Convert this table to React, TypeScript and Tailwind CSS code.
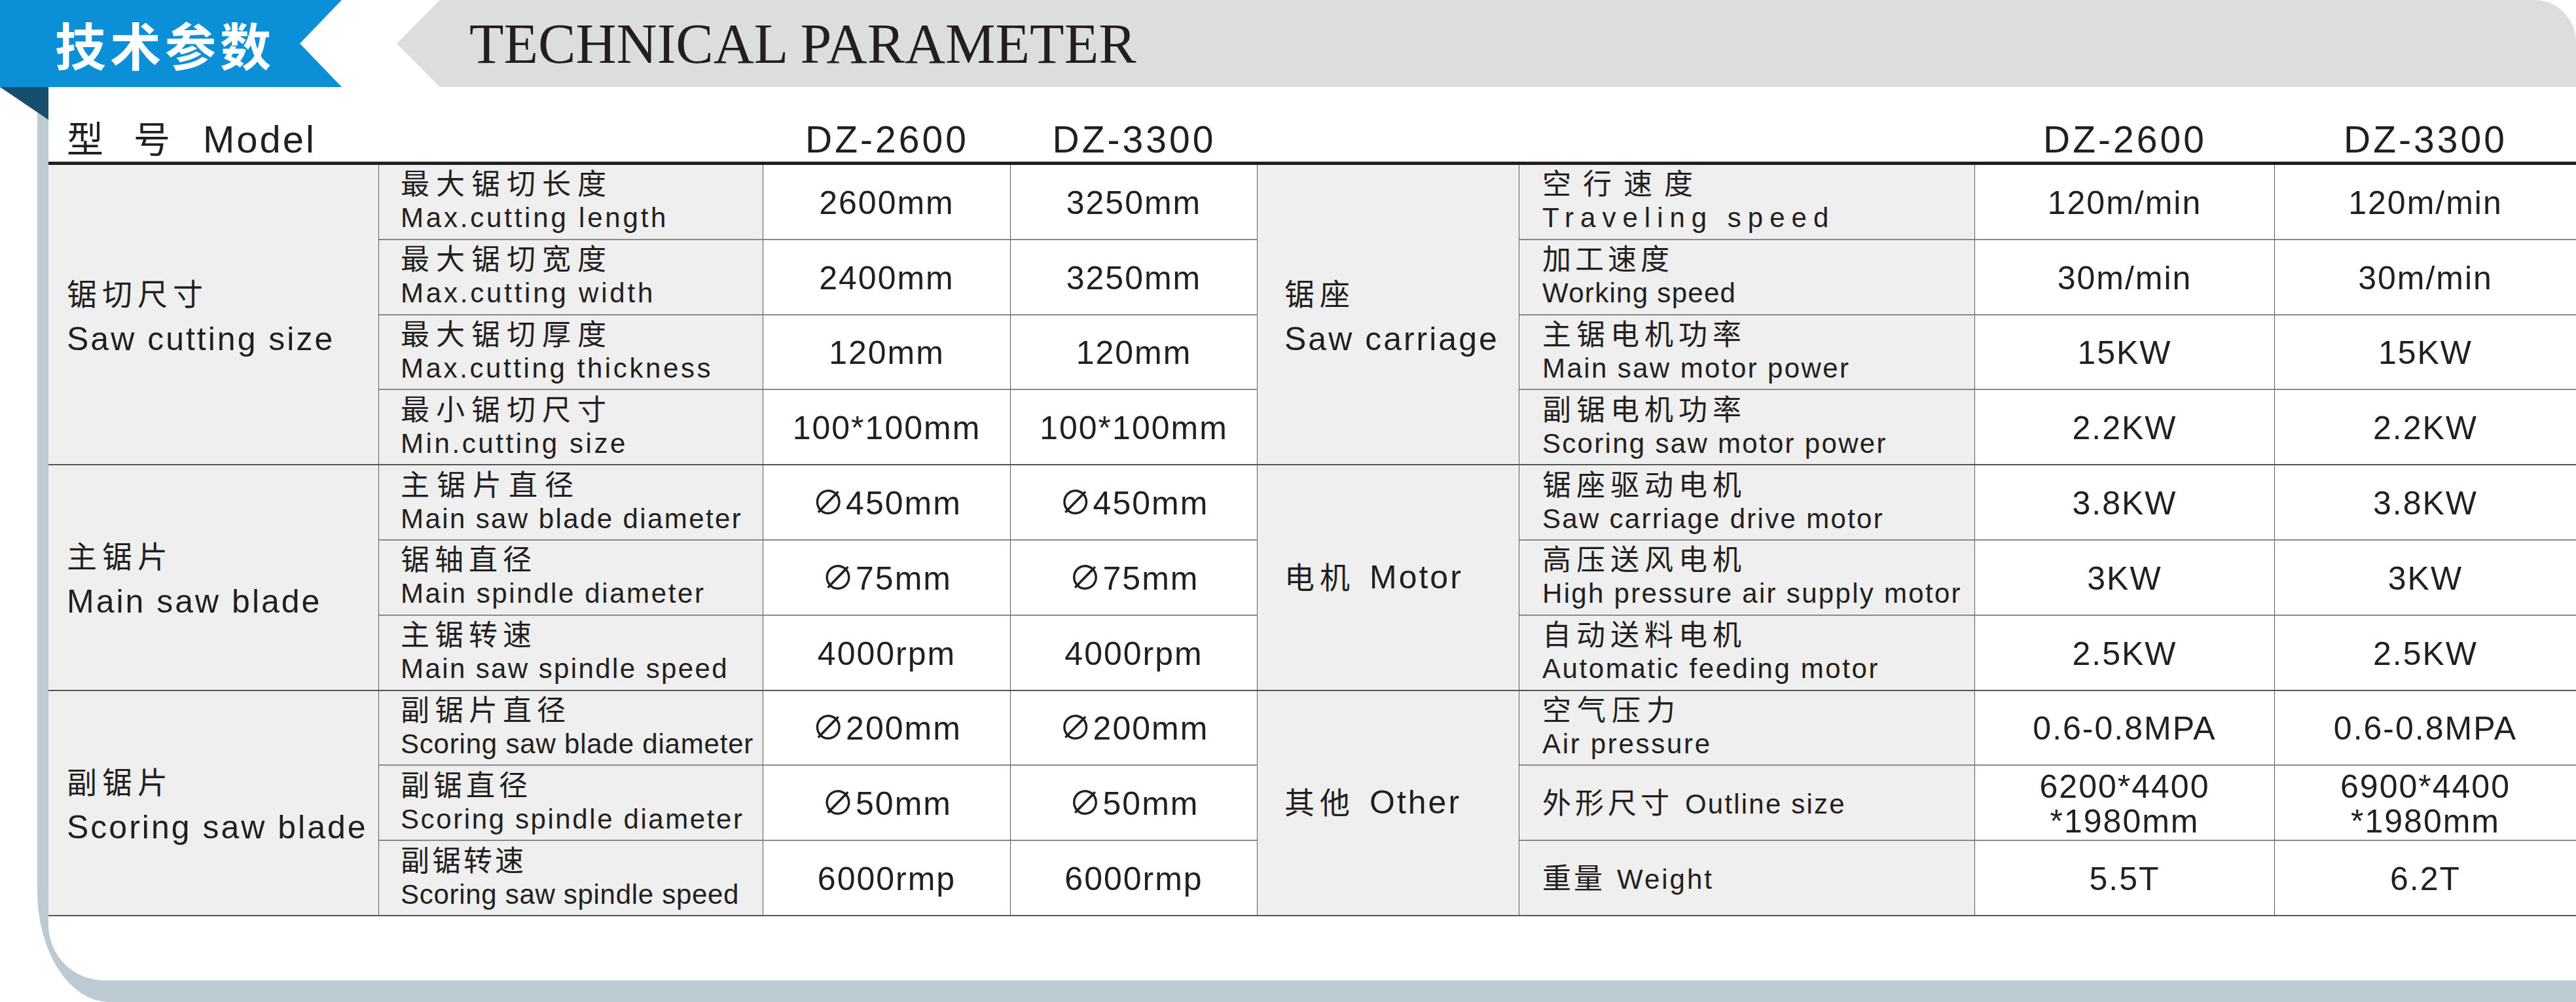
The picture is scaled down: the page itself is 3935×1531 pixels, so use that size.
import React from 'react';

type Item = {
  zh: string;
  en: string;
  a: string[];
  b: string[];
  zt?: string;
  et?: string;
  inline?: boolean;
};

type Group = { zh: string; en: string; inline?: boolean; items: Item[] };

const left: Group[] = [
  {
    zh: '锯切尺寸',
    en: 'Saw cutting size',
    items: [
      { zh: '最大锯切长度', en: 'Max.cutting length', a: ['2600mm'], b: ['3250mm'], zt: 'tracking-[10px]', et: 'tracking-[3.8px]' },
      { zh: '最大锯切宽度', en: 'Max.cutting width', a: ['2400mm'], b: ['3250mm'], zt: 'tracking-[10px]', et: 'tracking-[3.8px]' },
      { zh: '最大锯切厚度', en: 'Max.cutting thickness', a: ['120mm'], b: ['120mm'], zt: 'tracking-[10px]', et: 'tracking-[3.6px]' },
      { zh: '最小锯切尺寸', en: 'Min.cutting size', a: ['100*100mm'], b: ['100*100mm'], zt: 'tracking-[10px]', et: 'tracking-[3.6px]' },
    ],
  },
  {
    zh: '主锯片',
    en: 'Main saw blade',
    items: [
      { zh: '主锯片直径', en: 'Main saw blade diameter', a: ['∅450mm'], b: ['∅450mm'], zt: 'tracking-[11px]', et: 'tracking-[2.4px]' },
      { zh: '锯轴直径', en: 'Main spindle diameter', a: ['∅75mm'], b: ['∅75mm'], zt: 'tracking-[8px]', et: 'tracking-[2.6px]' },
      { zh: '主锯转速', en: 'Main saw spindle speed', a: ['4000rpm'], b: ['4000rpm'], zt: 'tracking-[8px]', et: 'tracking-[2.4px]' },
    ],
  },
  {
    zh: '副锯片',
    en: 'Scoring saw blade',
    items: [
      { zh: '副锯片直径', en: 'Scoring saw blade diameter', a: ['∅200mm'], b: ['∅200mm'], zt: 'tracking-[8px]', et: 'tracking-[0.8px]' },
      { zh: '副锯直径', en: 'Scoring spindle diameter', a: ['∅50mm'], b: ['∅50mm'], zt: 'tracking-[6px]', et: 'tracking-[2.6px]' },
      { zh: '副锯转速', en: 'Scoring saw spindle speed', a: ['6000rmp'], b: ['6000rmp'], zt: 'tracking-[4px]', et: 'tracking-[0.7px]' },
    ],
  },
];

const right: Group[] = [
  {
    zh: '锯座',
    en: 'Saw carriage',
    items: [
      { zh: '空行速度', en: 'Traveling speed', a: ['120m/min'], b: ['120m/min'], zt: 'tracking-[18px]', et: 'tracking-[10px]' },
      { zh: '加工速度', en: 'Working speed', a: ['30m/min'], b: ['30m/min'], zt: 'tracking-[6px]', et: 'tracking-[1.3px]' },
      { zh: '主锯电机功率', en: 'Main saw motor power', a: ['15KW'], b: ['15KW'], zt: 'tracking-[8px]', et: 'tracking-[2.4px]' },
      { zh: '副锯电机功率', en: 'Scoring saw motor power', a: ['2.2KW'], b: ['2.2KW'], zt: 'tracking-[8px]', et: 'tracking-[2.3px]' },
    ],
  },
  {
    zh: '电机',
    en: 'Motor',
    inline: true,
    items: [
      { zh: '锯座驱动电机', en: 'Saw carriage drive motor', a: ['3.8KW'], b: ['3.8KW'], zt: 'tracking-[8px]', et: 'tracking-[2.3px]' },
      { zh: '高压送风电机', en: 'High pressure air supply motor', a: ['3KW'], b: ['3KW'], zt: 'tracking-[8px]', et: 'tracking-[2.3px]' },
      { zh: '自动送料电机', en: 'Automatic feeding motor', a: ['2.5KW'], b: ['2.5KW'], zt: 'tracking-[8px]', et: 'tracking-[2.6px]' },
    ],
  },
  {
    zh: '其他',
    en: 'Other',
    inline: true,
    items: [
      { zh: '空气压力', en: 'Air pressure', a: ['0.6-0.8MPA'], b: ['0.6-0.8MPA'], zt: 'tracking-[9px]', et: 'tracking-[2.7px]' },
      { zh: '外形尺寸', en: 'Outline size', a: ['6200*4400', '*1980mm'], b: ['6900*4400', '*1980mm'], zt: 'tracking-[6px]', et: 'tracking-[2.2px]', inline: true },
      { zh: '重量', en: 'Weight', a: ['5.5T'], b: ['6.2T'], zt: 'tracking-[4px]', et: 'tracking-[3px]', inline: true },
    ],
  },
];

const font = 'font-["Liberation_Sans","Noto_Sans_CJK_SC",sans-serif]';
const cols = 'grid-cols-[505px_587px_378px_377px_400px_696px_458px_1fr]';

// flatten groups into 10 rows
function rowsOf(groups: Group[]) {
  const out: { group?: Group; span: number; item: Item; last: boolean }[] = [];
  groups.forEach((g) =>
    g.items.forEach((it, i) =>
      out.push({ group: i === 0 ? g : undefined, span: g.items.length, item: it, last: i === g.items.length - 1 }),
    ),
  );
  return out;
}

function GroupCell({ g, span, pad }: { g: Group; span: number; pad: string }) {
  const spanCls = span === 4 ? 'row-span-4' : 'row-span-3';
  return (
    <div
      className={`${spanCls} ${pad} ${g.inline ? '' : 'pt-[7px]'} bg-[#efefef] border-r border-r-[#5c5c5c] border-b-2 border-b-[#555] flex flex-col justify-center`}
    >
      {g.inline ? (
        <div className="flex items-baseline">
          <span className="text-[46px] leading-[56px] tracking-[8px]">{g.zh}</span>
          <span className="ml-[22px] text-[50px] leading-[56px] tracking-[3px]">{g.en}</span>
        </div>
      ) : (
        <>
          <div className="text-[46px] leading-[60px] tracking-[8px]">{g.zh}</div>
          <div className="mt-[7px] text-[50px] leading-[62px] tracking-[3px]">{g.en}</div>
        </>
      )}
    </div>
  );
}

function ParamCell({ it, last, pad }: { it: Item; last: boolean; pad: string }) {
  return (
    <div
      className={`bg-[#efefef] border-r border-r-[#5c5c5c] border-b-2 ${last ? 'border-b-[#555]' : 'border-b-[#8a8a8a]'} flex flex-col justify-center ${pad}`}
    >
      {it.inline ? (
        <div className="flex items-baseline pt-[4px]">
          <span className={`text-[44px] leading-[50px] ${it.zt}`}>{it.zh}</span>
          <span className={`ml-[18px] text-[42px] leading-[50px] ${it.et}`}>{it.en}</span>
        </div>
      ) : (
        <>
          <div className={`text-[44px] leading-[50px] ${it.zt}`}>{it.zh}</div>
          <div className={`text-[42px] leading-[52px] ${it.et}`}>{it.en}</div>
        </>
      )}
    </div>
  );
}

function ValueCell({ lines, last, end }: { lines: string[]; last: boolean; end?: boolean }) {
  return (
    <div
      className={`bg-white ${end ? '' : 'border-r border-r-[#5c5c5c]'} border-b-2 ${last ? 'border-b-[#555]' : 'border-b-[#8a8a8a]'} flex flex-col items-center justify-center pt-[4px] text-[50px] leading-[53px] tracking-[2px]`}
    >
      {lines.map((l) => (
        <div key={l}>{l}</div>
      ))}
    </div>
  );
}

export default function App() {
  const L = rowsOf(left);
  const R = rowsOf(right);

  return (
    <div className={`relative w-[3935px] h-[1531px] overflow-hidden bg-white text-[#231f20] flex flex-col ${font}`}>
      {/* banners */}
      <div className="flex h-[133px] shrink-0">
        <div className="w-[522px] shrink-0 bg-[#0b8fd6] [clip-path:polygon(0_0,100%_0,458px_50%,100%_100%,0_100%)] flex items-center pl-[84px]">
          <span className='font-["Noto_Sans_CJK_SC",sans-serif] font-bold text-white text-[78px] leading-none tracking-[6px]'>技术参数</span>
        </div>
        <div className="ml-[84px] flex-1 bg-[#dcdedd] rounded-tr-[64px] [clip-path:polygon(66px_0,100%_0,100%_100%,66px_100%,0_50%)] flex items-center pl-[111px]">
          <span className='font-["Liberation_Serif",serif] text-[86px] leading-none text-[#231f20]'>TECHNICAL PARAMETER</span>
        </div>
      </div>

      {/* folded corner */}
      <div className="absolute left-0 top-[133px] w-[74px] h-[50px] bg-[#174e6e] [clip-path:polygon(0_0,100%_0,100%_100%)]" />

      {/* frame */}
      <div className="flex flex-1">
        <div className="w-[57px] shrink-0" />
        <div className="flex flex-1 bg-[#bccad3] rounded-bl-[110px_170px] pl-[17px] pb-[33px]">
          <div className="flex-1 bg-white rounded-bl-[85px] flex flex-col">
            {/* model header */}
            <div className={`grid ${cols} h-[114px] items-end pb-[5px]`}>
              <div className="col-span-2 pl-[28px] flex items-baseline">
                <span className="text-[56px] leading-none">型</span>
                <span className="ml-[46px] text-[56px] leading-none">号</span>
                <span className="ml-[50px] text-[58px] leading-none tracking-[3px]">Model</span>
              </div>
              <div className="text-center text-[57px] leading-none tracking-[4px]">DZ-2600</div>
              <div className="text-center text-[57px] leading-none tracking-[4px]">DZ-3300</div>
              <div className="col-span-2" />
              <div className="text-center text-[57px] leading-none tracking-[4px]">DZ-2600</div>
              <div className="text-center text-[57px] leading-none tracking-[4px]">DZ-3300</div>
            </div>
            <div className="h-[5px] bg-[#231f20]" />

            {/* table */}
            <div className={`grid ${cols} grid-rows-[repeat(10,114.8px)]`}>
              {L.map((l, i) => {
                const r = R[i];
                return (
                  <React.Fragment key={i}>
                    {l.group && <GroupCell g={l.group} span={l.span} pad="pl-[28px]" />}
                    <ParamCell it={l.item} last={l.last} pad="pl-[33px]" />
                    <ValueCell lines={l.item.a} last={l.last} />
                    <ValueCell lines={l.item.b} last={l.last} />
                    {r.group && <GroupCell g={r.group} span={r.span} pad="pl-[41px]" />}
                    <ParamCell it={r.item} last={r.last} pad="pl-[35px]" />
                    <ValueCell lines={r.item.a} last={r.last} />
                    <ValueCell lines={r.item.b} last={r.last} end />
                  </React.Fragment>
                );
              })}
            </div>
          </div>
        </div>
      </div>
    </div>
  );
}
